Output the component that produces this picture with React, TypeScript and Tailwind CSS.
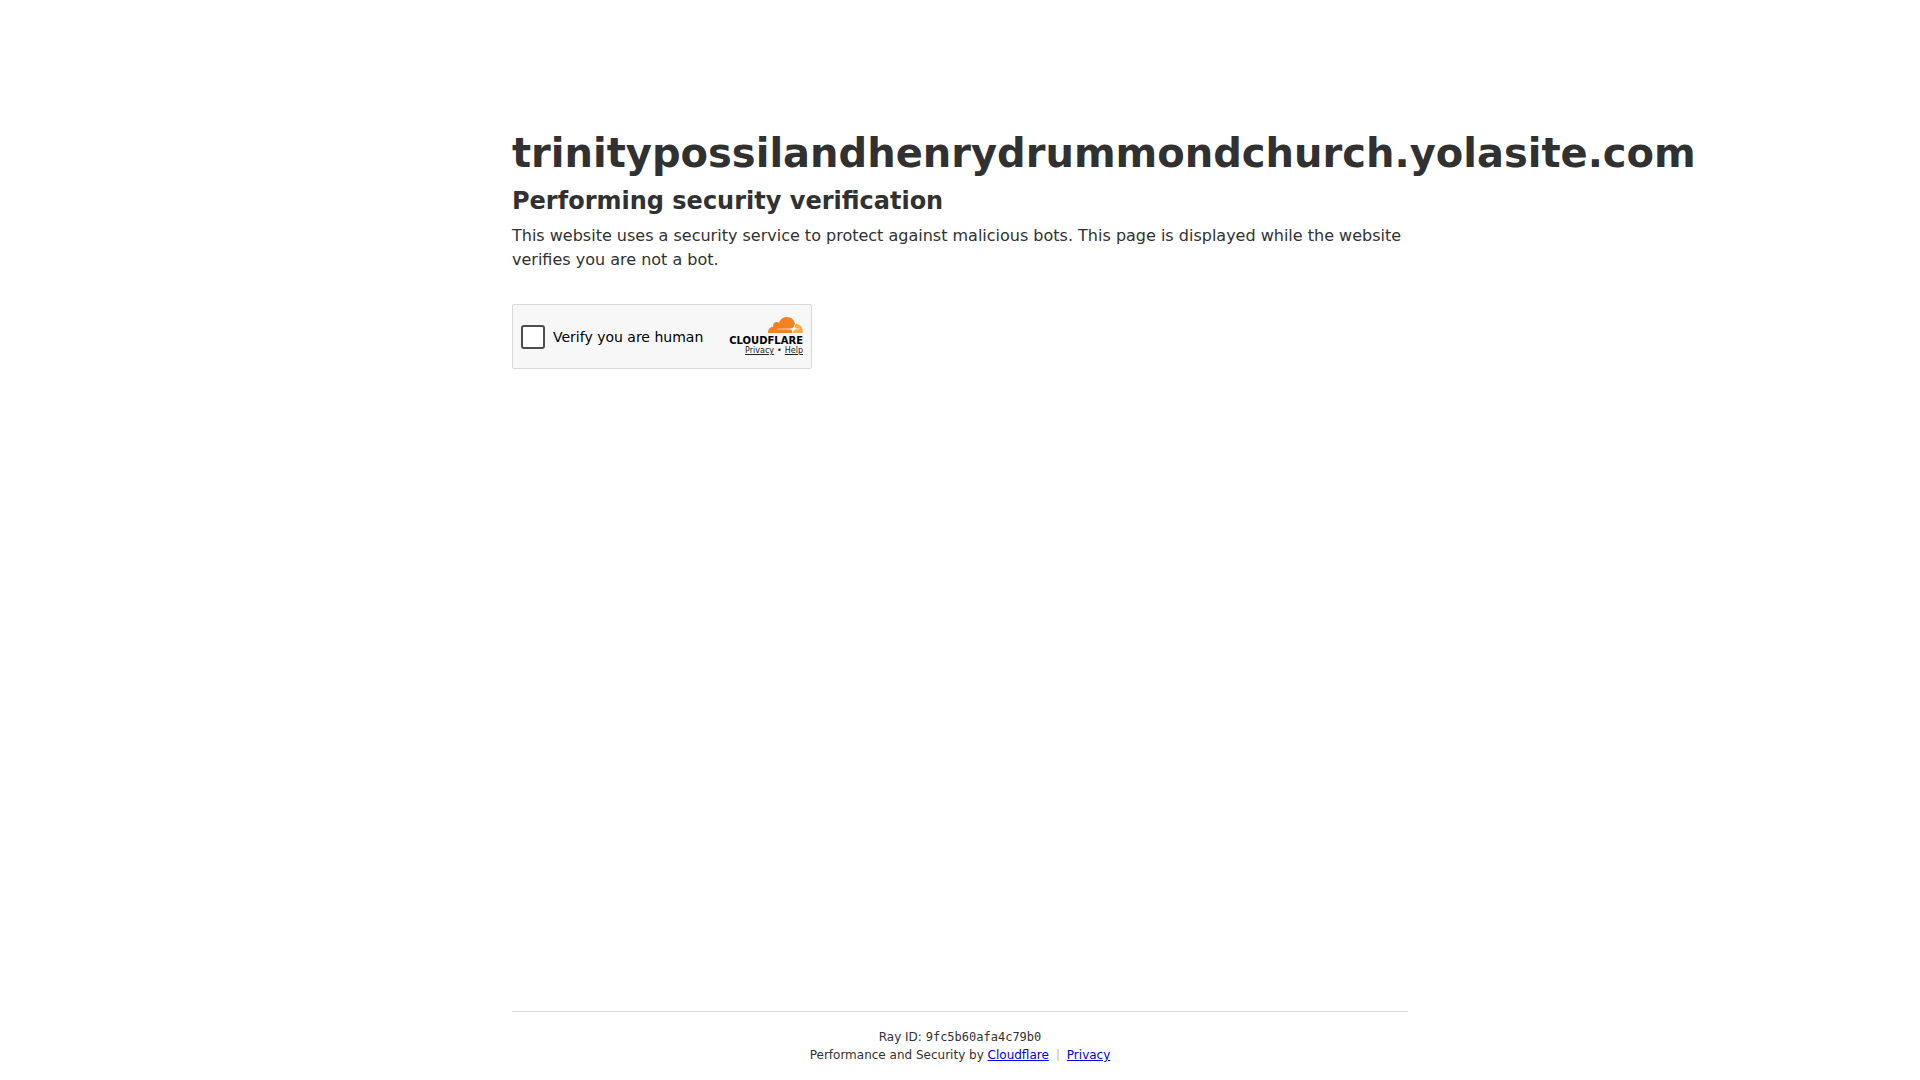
function CloudMark() {
  return (
    <svg viewBox="38 0 35 16" className="h-4 w-[35px]" role="img" aria-label="Cloudflare cloud">
      <path
        fill="#f6821f"
        d="M61.885 15.784L62.063 15.158C62.276 14.413 62.197 13.724 61.84 13.218C61.512 12.752 60.965 12.477 60.301 12.445L47.72 12.284C47.681 12.283 47.643 12.273 47.608 12.254C47.574 12.236 47.544 12.209 47.522 12.177C47.5 12.143 47.486 12.105 47.481 12.065C47.476 12.025 47.48 11.984 47.493 11.947C47.515 11.884 47.554 11.829 47.606 11.789C47.658 11.749 47.72 11.725 47.786 11.72L60.483 11.557C61.989 11.486 63.62 10.246 64.191 8.734L64.915 6.814C64.944 6.732 64.951 6.644 64.934 6.56C64.112 2.807 60.812 0 56.865 0C53.229 0 50.142 2.382 49.035 5.692C48.319 5.149 47.406 4.859 46.422 4.958C44.676 5.134 43.275 6.549 43.102 8.307C43.057 8.749 43.09 9.196 43.2 9.626C40.349 9.711 38.062 12.074 38.062 14.98C38.062 15.243 38.081 15.501 38.117 15.754C38.126 15.813 38.155 15.867 38.199 15.906C38.243 15.945 38.3 15.967 38.359 15.967H61.585C61.652 15.967 61.717 15.945 61.77 15.909C61.824 15.877 61.865 15.836 61.885 15.784Z"
      />
      <path
        fill="#fbad41"
        d="M66.076 6.953C65.959 6.953 65.843 6.956 65.727 6.962C65.709 6.963 65.69 6.967 65.673 6.974C65.643 6.984 65.615 7.002 65.593 7.026C65.571 7.05 65.555 7.079 65.547 7.11L65.052 8.84C64.839 9.585 64.918 10.273 65.275 10.779C65.603 11.246 66.15 11.52 66.814 11.552L69.496 11.715C69.533 11.717 69.57 11.727 69.603 11.744C69.635 11.762 69.664 11.787 69.685 11.817C69.708 11.851 69.723 11.89 69.728 11.931C69.733 11.971 69.728 12.013 69.715 12.051C69.693 12.114 69.654 12.168 69.602 12.209C69.55 12.249 69.488 12.273 69.423 12.278L66.636 12.441C65.123 12.511 63.492 13.751 62.921 15.264L62.72 15.796C62.7 15.88 62.75 15.967 62.85 15.967H72.303C72.356 15.968 72.407 15.951 72.45 15.919C72.492 15.887 72.523 15.842 72.537 15.79C72.708 15.172 72.794 14.533 72.793 13.891C72.791 10.06 69.784 6.953 66.076 6.953Z"
      />
    </svg>
  );
}

export default function App() {
  return (
    <div className="flex min-h-screen flex-col bg-white font-['DejaVu_Sans',sans-serif] text-[#313131]">
      <main className="mx-auto mt-32 w-full max-w-[896px] flex-1">
        <h1 className="text-[40px] leading-[50px] font-bold">trinitypossilandhenrydrummondchurch.yolasite.com</h1>
        <h2 className="mt-2 text-2xl leading-[30px] font-bold">Performing security verification</h2>
        <p className="mt-2 text-base leading-6">
          This website uses a security service to protect against malicious bots. This page is displayed while the website verifies you are not a bot.
        </p>
        <section className="mt-8 flex h-[65px] w-[300px] items-center justify-between rounded-xs border border-[#d9d9d9] bg-[#f7f7f7] px-2 text-black">
          <label className="flex items-center gap-2 text-sm leading-5">
            <input type="checkbox" className="size-6 appearance-none rounded-[3px] border-2 border-[#4d4d4d] bg-white checked:bg-[#4d4d4d]" />
            Verify you are human
          </label>
          <div className="flex flex-col items-end">
            <CloudMark />
            <span className="mt-0.5 text-[10px] leading-[11px] font-bold">CLOUDFLARE</span>
            <div className="flex gap-[3px] text-[8px] leading-[10px] text-[#232323]">
              <a href="#widget-privacy" className="underline">Privacy</a>
              <span>•</span>
              <a href="#widget-help" className="underline">Help</a>
            </div>
          </div>
        </section>
      </main>
      <footer className="mx-auto w-full max-w-[896px] border-t border-[#d9d9d9] py-4 text-center text-xs leading-[18px]">
        <div>
          Ray ID: <code className="font-['DejaVu_Sans_Mono',monospace]">9fc5b60afa4c79b0</code>
        </div>
        <div className="flex items-center justify-center">
          <span>
            Performance and Security by{" "}
            <a href="#cloudflare" className="text-[#0000ee] underline">Cloudflare</a>
          </span>
          <span className="mx-2 h-3 w-0.5 bg-[#d9d9d9]" />
          <a href="#privacy" className="text-[#0000ee] underline">Privacy</a>
        </div>
      </footer>
    </div>
  );
}
